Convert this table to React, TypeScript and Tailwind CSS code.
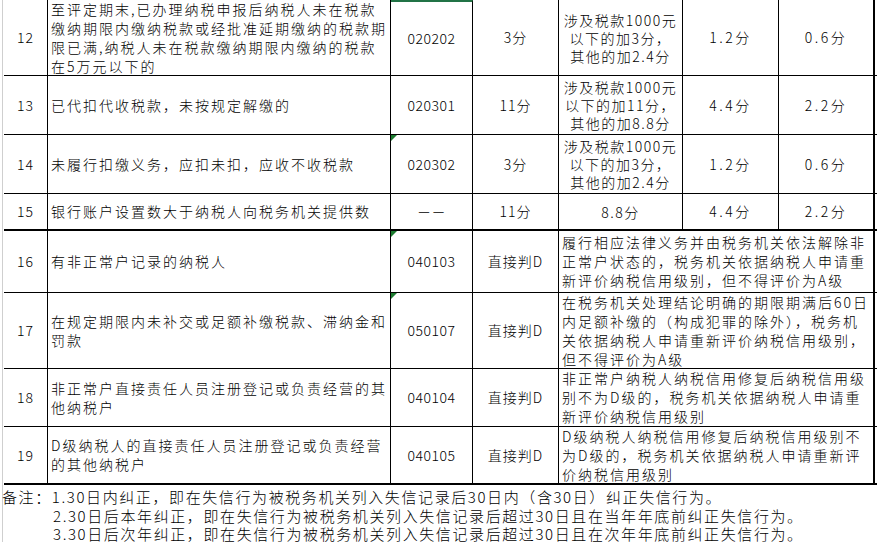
import React from 'react'

type Row = {
  no: string
  desc: string[]
  code: string
  score: string
  rule?: string[]
  a?: string
  b?: string
  remark?: string[]
  h: string
  thick?: boolean
  mark?: boolean
  selected?: boolean
}

const rows: Row[] = [
  {
    no: '12',
    desc: [
      '至评定期末,已办理纳税申报后纳税人未在税款',
      '缴纳期限内缴纳税款或经批准延期缴纳的税款期',
      '限已满,纳税人未在税款缴纳期限内缴纳的税款',
      '在5万元以下的',
    ],
    code: '020202',
    score: '3分',
    rule: ['涉及税款1000元', '以下的加3分，', '其他的加2.4分'],
    a: '1.2分',
    b: '0.6分',
    h: 'h-[76px]',
    selected: true,
  },
  {
    no: '13',
    desc: ['已代扣代收税款，未按规定解缴的'],
    code: '020301',
    score: '11分',
    rule: ['涉及税款1000元', '以下的加11分，', '其他的加8.8分'],
    a: '4.4分',
    b: '2.2分',
    h: 'h-[59px]',
  },
  {
    no: '14',
    desc: ['未履行扣缴义务，应扣未扣，应收不收税款'],
    code: '020302',
    score: '3分',
    rule: ['涉及税款1000元', '以下的加3分，', '其他的加2.4分'],
    a: '1.2分',
    b: '0.6分',
    h: 'h-[59px]',
    mark: true,
  },
  {
    no: '15',
    desc: ['银行账户设置数大于纳税人向税务机关提供数'],
    code: '－－',
    score: '11分',
    rule: ['8.8分'],
    a: '4.4分',
    b: '2.2分',
    h: 'h-[37px]',
    thick: true,
  },
  {
    no: '16',
    desc: ['有非正常户记录的纳税人'],
    code: '040103',
    score: '直接判D',
    remark: [
      '履行相应法律义务并由税务机关依法解除非',
      '正常户状态的，税务机关依据纳税人申请重',
      '新评价纳税信用级别，但不得评价为A级',
    ],
    h: 'h-[62px]',
    mark: true,
  },
  {
    no: '17',
    desc: ['在规定期限内未补交或足额补缴税款、滞纳金和', '罚款'],
    code: '050107',
    score: '直接判D',
    remark: [
      '在税务机关处理结论明确的期限期满后60日',
      '内足额补缴的（构成犯罪的除外），税务机',
      '关依据纳税人申请重新评价纳税信用级别，',
      '但不得评价为A级',
    ],
    h: 'h-[76px]',
    mark: true,
  },
  {
    no: '18',
    desc: ['非正常户直接责任人员注册登记或负责经营的其', '他纳税户'],
    code: '040104',
    score: '直接判D',
    remark: [
      '非正常户纳税人纳税信用修复后纳税信用级',
      '别不为D级的，税务机关依据纳税人申请重',
      '新评价纳税信用级别',
    ],
    h: 'h-[58px]',
  },
  {
    no: '19',
    desc: ['D级纳税人的直接责任人员注册登记或负责经营', '的其他纳税户'],
    code: '040105',
    score: '直接判D',
    remark: [
      'D级纳税人纳税信用修复后纳税信用级别不',
      '为D级的，税务机关依据纳税人申请重新评',
      '价纳税信用级别',
    ],
    h: 'h-[58px]',
    thick: true,
  },
]

function Lines({ lines, className }: { lines: string[]; className?: string }) {
  return (
    <div className={className}>
      {lines.map((l, i) => (
        <div key={i} className="whitespace-nowrap">
          {l}
        </div>
      ))}
    </div>
  )
}

export default function App() {
  return (
    <div className="w-[880px] h-[542px] overflow-hidden bg-white text-black font-light font-['Noto_Sans_CJK_SC','Liberation_Sans',sans-serif] pl-[2px]">
      <div className="border-l border-[#cfcfcf] pl-[1px] h-full">
        <div className="w-[873px]">
          {rows.map((r) => (
            <div
              key={r.no}
              className={`flex ${r.h} border-black ${r.thick ? 'border-b-2' : 'border-b'}`}
            >
              <div className="w-[44px] shrink-0 border-r border-black flex items-center justify-center text-[14px] tracking-[1px]">
                {r.no}
              </div>
              <div className="w-[343px] shrink-0 border-r border-black flex items-center pl-[3px] text-[14px] tracking-[2px] leading-[19px]">
                <Lines lines={r.desc} />
              </div>
              <div
                className={`relative w-[82px] shrink-0 border-r border-black flex items-center justify-center text-[14px] tracking-[0.5px] ${
                  r.selected ? 'border-t-2 border-t-[#217346]' : ''
                }`}
              >
                {r.mark && (
                  <span className="absolute top-0 left-0 w-0 h-0 border-t-[6px] border-t-[#1b7a2f] border-r-[6px] border-r-transparent" />
                )}
                {r.code}
              </div>
              <div className="w-[86px] shrink-0 border-r border-black flex items-center justify-center text-[14px] tracking-[1px]">
                {r.score}
              </div>
              {r.remark ? (
                <div className="w-[316px] shrink-0 border-r-2 border-black flex items-center pl-[3px] text-[14px] tracking-[2px] leading-[19px]">
                  <Lines lines={r.remark} />
                </div>
              ) : (
                <>
                  <div className="w-[124px] shrink-0 border-r border-black flex items-center justify-center text-[14px] tracking-[1.5px] leading-[18px]">
                    <Lines lines={r.rule ?? []} className="text-center" />
                  </div>
                  <div className="w-[96px] shrink-0 border-r border-black flex items-center justify-center text-[14px] tracking-[2.5px]">
                    {r.a}
                  </div>
                  <div className="w-[96px] shrink-0 border-r-2 border-black flex items-center justify-center text-[14px] tracking-[2.5px]">
                    {r.b}
                  </div>
                </>
              )}
            </div>
          ))}
          <div className="pt-[3px] text-[15px] tracking-[1.6px] leading-[18.5px] -ml-[2px]">
            <div className="whitespace-nowrap">备注：1.30日内纠正，即在失信行为被税务机关列入失信记录后30日内（含30日）纠正失信行为。</div>
            <div className="whitespace-nowrap pl-[51px]">2.30日后本年纠正，即在失信行为被税务机关列入失信记录后超过30日且在当年年底前纠正失信行为。</div>
            <div className="whitespace-nowrap pl-[51px]">3.30日后次年纠正，即在失信行为被税务机关列入失信记录后超过30日且在次年年底前纠正失信行为。</div>
          </div>
        </div>
      </div>
    </div>
  )
}
